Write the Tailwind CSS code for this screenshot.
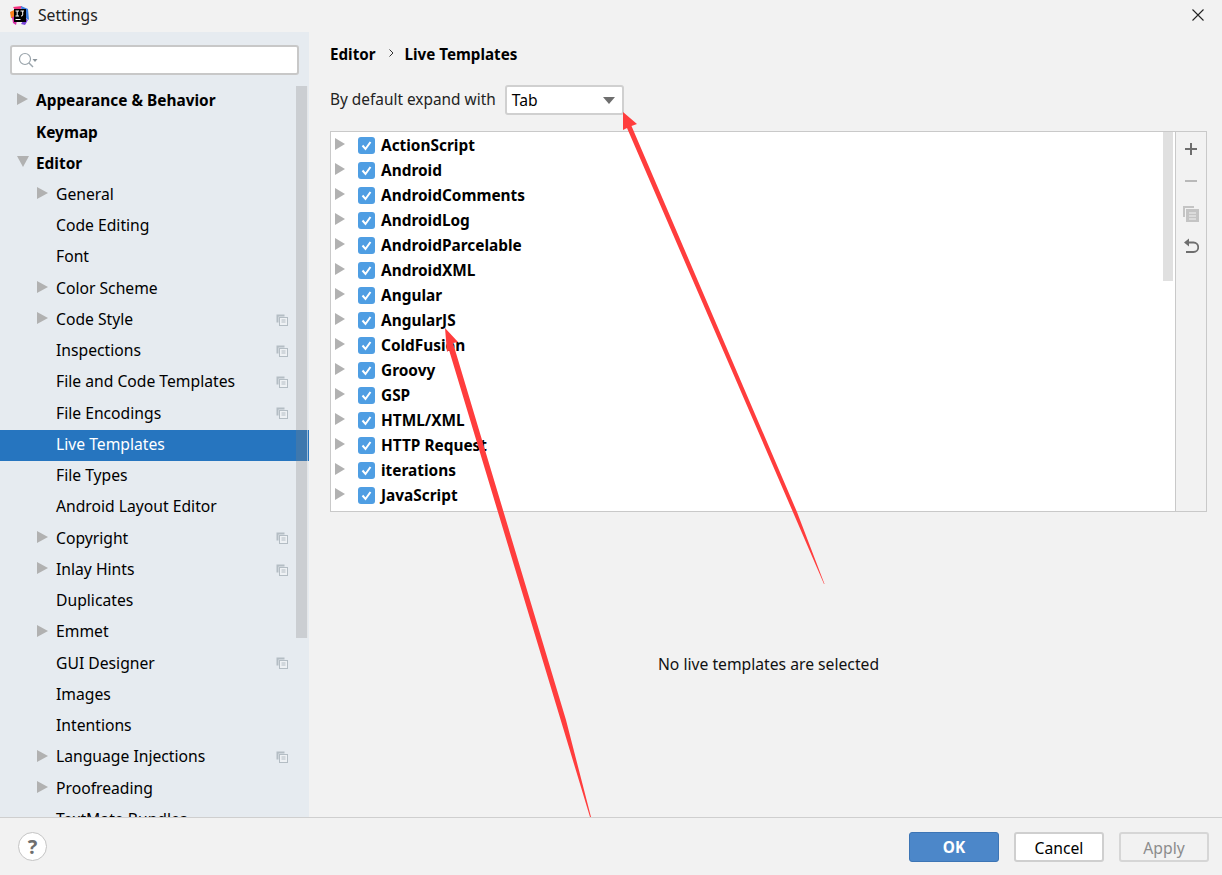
<!DOCTYPE html>
<html lang="en">

<head>
    <meta charset="UTF-8">
    <meta name="viewport" content="width=device-width, initial-scale=1.0">
    <title>Settings</title>
    <script src="https://cdn.jsdelivr.net/npm/@tailwindcss/browser@4"></script>
</head>

<body class="relative h-screen overflow-hidden bg-[#f2f2f2] font-['Noto_Sans',sans-serif] text-[15.7px] text-black">
    <div class="flex h-screen flex-col">

        <!-- title bar -->
        <header class="flex h-8 shrink-0 items-center pl-[10px]">
            <svg width="19" height="19" viewBox="0 0 19 19" class="mr-[9px] -mt-[2px]">
                <path d="M3 1 L12 0 L8 8 Z" fill="#f5317f"/>
                <path d="M11 0 L18 3 L19 14 L12 10 Z" fill="#3b7de0"/>
                <path d="M0 6 L6 3 L7 13 L1 12 Z" fill="#fc801d"/>
                <path d="M2 11 L8 10 L6 19 L3 17 Z" fill="#d42ea6"/>
                <path d="M15 12 L18 14 L15 19 L11 18 Z" fill="#7a45d8"/>
                <rect x="4" y="3" width="12" height="13" fill="#000"/>
                <rect x="5.5" y="13" width="5" height="1" fill="#fff"/>
                <path d="M5.5 5 H9 M7.2 5 V10 M5.5 10 H9 M10.5 5 H14 M12.7 5 V9 Q12.7 10 11 10" stroke="#fff" stroke-width="1" fill="none"/>
            </svg>
            <span class="text-[#222] -mt-[1px]">Settings</span>
            <svg width="12" height="12" viewBox="0 0 12 12" class="ml-auto mr-[18px] -mt-[2px]">
                <path d="M0.5 0.5 L11.5 11.5 M11.5 0.5 L0.5 11.5" stroke="#222" stroke-width="1.1"/>
            </svg>
        </header>

        <div class="flex min-h-0 flex-1">

            <!-- settings tree -->
            <aside class="relative w-[309px] shrink-0 overflow-hidden bg-[#e6ebf0]">
                <div class="mx-[10px] mt-[13px] flex h-[30px] w-[289px] items-center rounded-[3px] border-2 border-[#c8c8c8] bg-white pl-[6px]">
                    <svg width="20" height="18" viewBox="0 0 20 18">
                        <circle cx="7" cy="8" r="5.5" fill="none" stroke="#9aa4ab" stroke-width="1.2"/>
                        <path d="M11 12 L15 16" stroke="#9aa4ab" stroke-width="1.4"/>
                        <path d="M14.5 8 H19.5 L17 11 Z" fill="#8a949b"/>
                    </svg>
                </div>

                <div class="absolute top-[54px] right-[1px] z-10 h-[552px] w-[12px] border-r border-white/50 bg-[#808080]/[0.27]"></div>

                <div class="mt-[11px] [&>div]:pb-[1.5px]">
                    <div class="flex h-[31.25px] items-center pl-[17px] text-[15.4px] font-bold"><svg width="11" height="12" viewBox="0 0 11 12" class="mr-[8px] -mt-[3px] fill-[#b1b1b1]"><path d="M0 0 L11 6 L0 12 Z"/></svg><span>Appearance &amp; Behavior</span></div>
                    <div class="flex h-[31.25px] items-center pl-[36px] text-[15.4px] font-bold">Keymap</div>
                    <div class="flex h-[31.25px] items-center pl-[17px] text-[15.4px] font-bold"><svg width="12" height="11" viewBox="0 0 12 11" class="mr-[7px] -mt-[3px] fill-[#b1b1b1]"><path d="M0 0 L12 0 L6 11 Z"/></svg><span>Editor</span></div>
                    <div class="flex h-[31.25px] items-center pl-[37px]"><svg width="11" height="12" viewBox="0 0 11 12" class="mr-[8px] -mt-[3px] fill-[#b1b1b1]"><path d="M0 0 L11 6 L0 12 Z"/></svg><span>General</span></div>
                    <div class="flex h-[31.25px] items-center pl-[56px]">Code Editing</div>
                    <div class="flex h-[31.25px] items-center pl-[56px]">Font</div>
                    <div class="flex h-[31.25px] items-center pl-[37px]"><svg width="11" height="12" viewBox="0 0 11 12" class="mr-[8px] -mt-[3px] fill-[#b1b1b1]"><path d="M0 0 L11 6 L0 12 Z"/></svg><span>Color Scheme</span></div>
                    <div class="flex h-[31.25px] items-center pl-[37px]"><svg width="11" height="12" viewBox="0 0 11 12" class="mr-[8px] -mt-[3px] fill-[#b1b1b1]"><path d="M0 0 L11 6 L0 12 Z"/></svg><span>Code Style</span><svg width="12" height="12" viewBox="0 0 12 12" class="ml-auto mr-[21px]"><path d="M0.5 0.5 H8.5 V2.5 H2.5 V8.5 H0.5 Z" fill="#b4bdc4"/><rect x="3.5" y="3.5" width="8" height="8" fill="#eef1f4" stroke="#b4bdc4"/><path d="M5.5 6 H9.5 M5.5 8 H9.5" stroke="#b4bdc4"/></svg></div>
                    <div class="flex h-[31.25px] items-center pl-[56px]"><span>Inspections</span><svg width="12" height="12" viewBox="0 0 12 12" class="ml-auto mr-[21px]"><path d="M0.5 0.5 H8.5 V2.5 H2.5 V8.5 H0.5 Z" fill="#b4bdc4"/><rect x="3.5" y="3.5" width="8" height="8" fill="#eef1f4" stroke="#b4bdc4"/><path d="M5.5 6 H9.5 M5.5 8 H9.5" stroke="#b4bdc4"/></svg></div>
                    <div class="flex h-[31.25px] items-center pl-[56px]"><span>File and Code Templates</span><svg width="12" height="12" viewBox="0 0 12 12" class="ml-auto mr-[21px]"><path d="M0.5 0.5 H8.5 V2.5 H2.5 V8.5 H0.5 Z" fill="#b4bdc4"/><rect x="3.5" y="3.5" width="8" height="8" fill="#eef1f4" stroke="#b4bdc4"/><path d="M5.5 6 H9.5 M5.5 8 H9.5" stroke="#b4bdc4"/></svg></div>
                    <div class="flex h-[31.25px] items-center pl-[56px]"><span>File Encodings</span><svg width="12" height="12" viewBox="0 0 12 12" class="ml-auto mr-[21px]"><path d="M0.5 0.5 H8.5 V2.5 H2.5 V8.5 H0.5 Z" fill="#b4bdc4"/><rect x="3.5" y="3.5" width="8" height="8" fill="#eef1f4" stroke="#b4bdc4"/><path d="M5.5 6 H9.5 M5.5 8 H9.5" stroke="#b4bdc4"/></svg></div>
                    <div class="flex h-[31.25px] items-center bg-[#2675bf] pl-[56px] text-white">Live Templates</div>
                    <div class="flex h-[31.25px] items-center pl-[56px]">File Types</div>
                    <div class="flex h-[31.25px] items-center pl-[56px]">Android Layout Editor</div>
                    <div class="flex h-[31.25px] items-center pl-[37px]"><svg width="11" height="12" viewBox="0 0 11 12" class="mr-[8px] -mt-[3px] fill-[#b1b1b1]"><path d="M0 0 L11 6 L0 12 Z"/></svg><span>Copyright</span><svg width="12" height="12" viewBox="0 0 12 12" class="ml-auto mr-[21px]"><path d="M0.5 0.5 H8.5 V2.5 H2.5 V8.5 H0.5 Z" fill="#b4bdc4"/><rect x="3.5" y="3.5" width="8" height="8" fill="#eef1f4" stroke="#b4bdc4"/><path d="M5.5 6 H9.5 M5.5 8 H9.5" stroke="#b4bdc4"/></svg></div>
                    <div class="flex h-[31.25px] items-center pl-[37px]"><svg width="11" height="12" viewBox="0 0 11 12" class="mr-[8px] -mt-[3px] fill-[#b1b1b1]"><path d="M0 0 L11 6 L0 12 Z"/></svg><span>Inlay Hints</span><svg width="12" height="12" viewBox="0 0 12 12" class="ml-auto mr-[21px]"><path d="M0.5 0.5 H8.5 V2.5 H2.5 V8.5 H0.5 Z" fill="#b4bdc4"/><rect x="3.5" y="3.5" width="8" height="8" fill="#eef1f4" stroke="#b4bdc4"/><path d="M5.5 6 H9.5 M5.5 8 H9.5" stroke="#b4bdc4"/></svg></div>
                    <div class="flex h-[31.25px] items-center pl-[56px]">Duplicates</div>
                    <div class="flex h-[31.25px] items-center pl-[37px]"><svg width="11" height="12" viewBox="0 0 11 12" class="mr-[8px] -mt-[3px] fill-[#b1b1b1]"><path d="M0 0 L11 6 L0 12 Z"/></svg><span>Emmet</span></div>
                    <div class="flex h-[31.25px] items-center pl-[56px]"><span>GUI Designer</span><svg width="12" height="12" viewBox="0 0 12 12" class="ml-auto mr-[21px]"><path d="M0.5 0.5 H8.5 V2.5 H2.5 V8.5 H0.5 Z" fill="#b4bdc4"/><rect x="3.5" y="3.5" width="8" height="8" fill="#eef1f4" stroke="#b4bdc4"/><path d="M5.5 6 H9.5 M5.5 8 H9.5" stroke="#b4bdc4"/></svg></div>
                    <div class="flex h-[31.25px] items-center pl-[56px]">Images</div>
                    <div class="flex h-[31.25px] items-center pl-[56px]">Intentions</div>
                    <div class="flex h-[31.25px] items-center pl-[37px]"><svg width="11" height="12" viewBox="0 0 11 12" class="mr-[8px] -mt-[3px] fill-[#b1b1b1]"><path d="M0 0 L11 6 L0 12 Z"/></svg><span>Language Injections</span><svg width="12" height="12" viewBox="0 0 12 12" class="ml-auto mr-[21px]"><path d="M0.5 0.5 H8.5 V2.5 H2.5 V8.5 H0.5 Z" fill="#b4bdc4"/><rect x="3.5" y="3.5" width="8" height="8" fill="#eef1f4" stroke="#b4bdc4"/><path d="M5.5 6 H9.5 M5.5 8 H9.5" stroke="#b4bdc4"/></svg></div>
                    <div class="flex h-[31.25px] items-center pl-[37px]"><svg width="11" height="12" viewBox="0 0 11 12" class="mr-[8px] -mt-[3px] fill-[#b1b1b1]"><path d="M0 0 L11 6 L0 12 Z"/></svg><span>Proofreading</span></div>
                    <div class="flex h-[31.25px] items-center pl-[56px]">TextMate Bundles</div>
                </div>
            </aside>

            <!-- live templates panel -->
            <main class="flex min-w-0 flex-1 flex-col pl-[21px] pr-[15px]">
                <div class="mt-[10px] flex h-[24px] items-center text-[15.2px] font-bold">
                    <span>Editor</span>
                    <svg width="5" height="8" viewBox="0 0 5 8" class="ml-[13px] mr-[11px] -mt-[3px]"><path d="M0.5 0.5 L4 4 L0.5 7.5" fill="none" stroke="#333" stroke-width="1"/></svg>
                    <span>Live Templates</span>
                </div>

                <div class="mt-[19px] flex h-[30px] items-center">
                    <span class="mr-[9px] -mt-[1px] text-[15.4px] text-[#222]">By default expand with</span>
                    <div class="flex h-[30px] w-[119px] items-center justify-between rounded-[3px] border-2 border-[#d0d0d0] bg-white pl-[5px] pr-[7px]">
                        <span class="pt-[1px]">Tab</span>
                        <svg width="12" height="7" viewBox="0 0 12 7" class="fill-[#6e6e6e]"><path d="M0 0 H12 L6 7 Z"/></svg>
                    </div>
                </div>

                <div class="mt-[16px] flex h-[381px] border border-[#c9c9c9]">
                    <div class="relative min-w-0 flex-1 overflow-hidden border-r border-[#c9c9c9] bg-white pt-[1px] text-[15.4px] font-bold">
                        <div class="absolute top-0 right-[1px] h-[150px] w-[12px] border-x border-b border-white bg-[#e0e0e0]"></div>
                        <div class="flex h-[25px] items-center pl-[4px]"><svg width="10" height="12" viewBox="0 0 10 12" class="mr-[13px] -mt-[3px] fill-[#b1b1b1]"><path d="M0 0 L10 6 L0 12 Z"/></svg><svg width="17" height="17" viewBox="0 0 17 17" class="mr-[6px]"><rect width="17" height="17" rx="3" fill="#4f9ee3"/><path d="M4.5 8.5 L7.5 12 L12.5 5" fill="none" stroke="#fff" stroke-width="2"/></svg><span>ActionScript</span></div>
                        <div class="flex h-[25px] items-center pl-[4px]"><svg width="10" height="12" viewBox="0 0 10 12" class="mr-[13px] -mt-[3px] fill-[#b1b1b1]"><path d="M0 0 L10 6 L0 12 Z"/></svg><svg width="17" height="17" viewBox="0 0 17 17" class="mr-[6px]"><rect width="17" height="17" rx="3" fill="#4f9ee3"/><path d="M4.5 8.5 L7.5 12 L12.5 5" fill="none" stroke="#fff" stroke-width="2"/></svg><span>Android</span></div>
                        <div class="flex h-[25px] items-center pl-[4px]"><svg width="10" height="12" viewBox="0 0 10 12" class="mr-[13px] -mt-[3px] fill-[#b1b1b1]"><path d="M0 0 L10 6 L0 12 Z"/></svg><svg width="17" height="17" viewBox="0 0 17 17" class="mr-[6px]"><rect width="17" height="17" rx="3" fill="#4f9ee3"/><path d="M4.5 8.5 L7.5 12 L12.5 5" fill="none" stroke="#fff" stroke-width="2"/></svg><span>AndroidComments</span></div>
                        <div class="flex h-[25px] items-center pl-[4px]"><svg width="10" height="12" viewBox="0 0 10 12" class="mr-[13px] -mt-[3px] fill-[#b1b1b1]"><path d="M0 0 L10 6 L0 12 Z"/></svg><svg width="17" height="17" viewBox="0 0 17 17" class="mr-[6px]"><rect width="17" height="17" rx="3" fill="#4f9ee3"/><path d="M4.5 8.5 L7.5 12 L12.5 5" fill="none" stroke="#fff" stroke-width="2"/></svg><span>AndroidLog</span></div>
                        <div class="flex h-[25px] items-center pl-[4px]"><svg width="10" height="12" viewBox="0 0 10 12" class="mr-[13px] -mt-[3px] fill-[#b1b1b1]"><path d="M0 0 L10 6 L0 12 Z"/></svg><svg width="17" height="17" viewBox="0 0 17 17" class="mr-[6px]"><rect width="17" height="17" rx="3" fill="#4f9ee3"/><path d="M4.5 8.5 L7.5 12 L12.5 5" fill="none" stroke="#fff" stroke-width="2"/></svg><span>AndroidParcelable</span></div>
                        <div class="flex h-[25px] items-center pl-[4px]"><svg width="10" height="12" viewBox="0 0 10 12" class="mr-[13px] -mt-[3px] fill-[#b1b1b1]"><path d="M0 0 L10 6 L0 12 Z"/></svg><svg width="17" height="17" viewBox="0 0 17 17" class="mr-[6px]"><rect width="17" height="17" rx="3" fill="#4f9ee3"/><path d="M4.5 8.5 L7.5 12 L12.5 5" fill="none" stroke="#fff" stroke-width="2"/></svg><span>AndroidXML</span></div>
                        <div class="flex h-[25px] items-center pl-[4px]"><svg width="10" height="12" viewBox="0 0 10 12" class="mr-[13px] -mt-[3px] fill-[#b1b1b1]"><path d="M0 0 L10 6 L0 12 Z"/></svg><svg width="17" height="17" viewBox="0 0 17 17" class="mr-[6px]"><rect width="17" height="17" rx="3" fill="#4f9ee3"/><path d="M4.5 8.5 L7.5 12 L12.5 5" fill="none" stroke="#fff" stroke-width="2"/></svg><span>Angular</span></div>
                        <div class="flex h-[25px] items-center pl-[4px]"><svg width="10" height="12" viewBox="0 0 10 12" class="mr-[13px] -mt-[3px] fill-[#b1b1b1]"><path d="M0 0 L10 6 L0 12 Z"/></svg><svg width="17" height="17" viewBox="0 0 17 17" class="mr-[6px]"><rect width="17" height="17" rx="3" fill="#4f9ee3"/><path d="M4.5 8.5 L7.5 12 L12.5 5" fill="none" stroke="#fff" stroke-width="2"/></svg><span>AngularJS</span></div>
                        <div class="flex h-[25px] items-center pl-[4px]"><svg width="10" height="12" viewBox="0 0 10 12" class="mr-[13px] -mt-[3px] fill-[#b1b1b1]"><path d="M0 0 L10 6 L0 12 Z"/></svg><svg width="17" height="17" viewBox="0 0 17 17" class="mr-[6px]"><rect width="17" height="17" rx="3" fill="#4f9ee3"/><path d="M4.5 8.5 L7.5 12 L12.5 5" fill="none" stroke="#fff" stroke-width="2"/></svg><span>ColdFusion</span></div>
                        <div class="flex h-[25px] items-center pl-[4px]"><svg width="10" height="12" viewBox="0 0 10 12" class="mr-[13px] -mt-[3px] fill-[#b1b1b1]"><path d="M0 0 L10 6 L0 12 Z"/></svg><svg width="17" height="17" viewBox="0 0 17 17" class="mr-[6px]"><rect width="17" height="17" rx="3" fill="#4f9ee3"/><path d="M4.5 8.5 L7.5 12 L12.5 5" fill="none" stroke="#fff" stroke-width="2"/></svg><span>Groovy</span></div>
                        <div class="flex h-[25px] items-center pl-[4px]"><svg width="10" height="12" viewBox="0 0 10 12" class="mr-[13px] -mt-[3px] fill-[#b1b1b1]"><path d="M0 0 L10 6 L0 12 Z"/></svg><svg width="17" height="17" viewBox="0 0 17 17" class="mr-[6px]"><rect width="17" height="17" rx="3" fill="#4f9ee3"/><path d="M4.5 8.5 L7.5 12 L12.5 5" fill="none" stroke="#fff" stroke-width="2"/></svg><span>GSP</span></div>
                        <div class="flex h-[25px] items-center pl-[4px]"><svg width="10" height="12" viewBox="0 0 10 12" class="mr-[13px] -mt-[3px] fill-[#b1b1b1]"><path d="M0 0 L10 6 L0 12 Z"/></svg><svg width="17" height="17" viewBox="0 0 17 17" class="mr-[6px]"><rect width="17" height="17" rx="3" fill="#4f9ee3"/><path d="M4.5 8.5 L7.5 12 L12.5 5" fill="none" stroke="#fff" stroke-width="2"/></svg><span>HTML/XML</span></div>
                        <div class="flex h-[25px] items-center pl-[4px]"><svg width="10" height="12" viewBox="0 0 10 12" class="mr-[13px] -mt-[3px] fill-[#b1b1b1]"><path d="M0 0 L10 6 L0 12 Z"/></svg><svg width="17" height="17" viewBox="0 0 17 17" class="mr-[6px]"><rect width="17" height="17" rx="3" fill="#4f9ee3"/><path d="M4.5 8.5 L7.5 12 L12.5 5" fill="none" stroke="#fff" stroke-width="2"/></svg><span>HTTP Request</span></div>
                        <div class="flex h-[25px] items-center pl-[4px]"><svg width="10" height="12" viewBox="0 0 10 12" class="mr-[13px] -mt-[3px] fill-[#b1b1b1]"><path d="M0 0 L10 6 L0 12 Z"/></svg><svg width="17" height="17" viewBox="0 0 17 17" class="mr-[6px]"><rect width="17" height="17" rx="3" fill="#4f9ee3"/><path d="M4.5 8.5 L7.5 12 L12.5 5" fill="none" stroke="#fff" stroke-width="2"/></svg><span>iterations</span></div>
                        <div class="flex h-[25px] items-center pl-[4px]"><svg width="10" height="12" viewBox="0 0 10 12" class="mr-[13px] -mt-[3px] fill-[#b1b1b1]"><path d="M0 0 L10 6 L0 12 Z"/></svg><svg width="17" height="17" viewBox="0 0 17 17" class="mr-[6px]"><rect width="17" height="17" rx="3" fill="#4f9ee3"/><path d="M4.5 8.5 L7.5 12 L12.5 5" fill="none" stroke="#fff" stroke-width="2"/></svg><span>JavaScript</span></div>
                    </div>
                    <div class="flex w-[30px] shrink-0 flex-col items-center pt-[10px]">
                        <svg width="14" height="14" viewBox="0 0 14 14" class="mb-[18px]"><path d="M7 1 V13 M1 7 H13" stroke="#6e6e6e" stroke-width="2"/></svg>
                        <svg width="14" height="14" viewBox="0 0 14 14" class="mb-[18px]"><path d="M1 7 H13" stroke="#b9b9b9" stroke-width="2"/></svg>
                        <svg width="16" height="16" viewBox="0 0 16 16" class="mb-[16px]"><path d="M0 0 H11 V2 H2 V11 H0 Z" fill="#c4c4c4"/><rect x="3" y="3" width="13" height="13" fill="#c4c4c4"/><path d="M6 7 H13 M6 10 H13 M6 13 H13" stroke="#f2f2f2"/></svg>
                        <svg width="16" height="16" viewBox="0 0 16 16"><path d="M1 4.5 L6 0.5 V8.5 Z" fill="#6e6e6e"/><path d="M5 4.5 H10.5 A4.5 4.5 0 0 1 10.5 14 H3" fill="none" stroke="#6e6e6e" stroke-width="1.8"/></svg>
                    </div>
                </div>

                <div class="flex flex-1 items-center justify-center pt-[1px] text-[#111]">No live templates are selected</div>
            </main>
        </div>

        <!-- dialog buttons -->
        <footer class="z-10 flex h-[58px] shrink-0 items-center border-t border-[#cfcfcf] bg-[#f2f2f2] pl-[18px] pr-[13px]">
            <div class="flex h-[29px] w-[29px] items-center justify-center rounded-full border border-[#c4c4c4] bg-white text-[20px] font-bold text-[#6e6e6e]">?</div>
            <button class="ml-auto h-[30px] w-[90px] rounded-[3px] border border-[#3d75b5] bg-[#4c87c9] pt-[3px] text-[15.4px] font-bold text-white">OK</button>
            <button class="ml-[15px] h-[30px] w-[90px] rounded-[3px] border-2 border-[#cfcfcf] bg-white pt-[3px] text-black">Cancel</button>
            <button class="ml-[15px] h-[30px] w-[90px] rounded-[3px] border-2 border-[#d6d6d6] bg-[#f2f2f2] pt-[3px] text-[#8c8c8c]">Apply</button>
        </footer>
    </div>

    <!-- red annotation arrows drawn over the dialog -->
    <svg width="1222" height="817" viewBox="0 0 1222 817" class="pointer-events-none absolute top-0 left-0">
        <polygon points="623,112 637,124 631.5,126 797,512 824.5,584 824,584 627,128 623,130" fill="#ff3d3d"/>
        <polygon points="445,328 458,342 453,343 488,460 566,720 591,817 590,817 449,350 447,352" fill="#ff3d3d"/>
    </svg>
</body>

</html>
